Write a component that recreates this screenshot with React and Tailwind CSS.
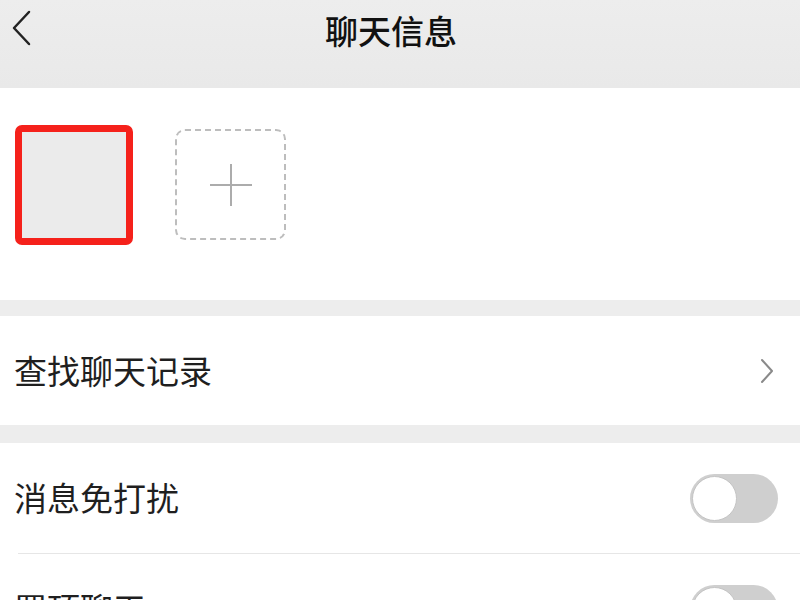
import React from 'react';

function Toggle() {
  return (
    <div className="w-[88px] h-[49px] rounded-full bg-[#cfcfcf] flex items-center px-[2px]">
      <div className="w-[45px] h-[45px] rounded-full bg-white border border-[#c4c4c4]" />
    </div>
  );
}

export default function App() {
  return (
    <div
      className="w-[800px] h-[600px] overflow-hidden bg-[#ededed] text-[#1f1f1f]"
      style={{ fontFamily: '"Noto Sans CJK SC", "Noto Sans", sans-serif' }}
    >
      {/* header */}
      <div className="h-[88px] relative flex justify-center pt-[7px] pr-[18px] bg-gradient-to-b from-[#ededed] to-[#e9e9e9]">
        <button className="absolute left-[10px] top-[10px]">
          <svg width="24" height="38" viewBox="0 0 24 38" fill="none">
            <path d="M19 2 L4 18 L19 34" stroke="#222" strokeWidth="2.5" strokeLinecap="round" strokeLinejoin="round" />
          </svg>
        </button>
        <h1 className="text-[33px] leading-[46px] font-medium text-[#111]">聊天信息</h1>
      </div>

      {/* members */}
      <div className="bg-white h-[212px] flex items-start gap-[42px] pl-[15px] pt-[37px]">
        <div className="w-[118px] h-[120px] rounded-[7px] border-[7px] border-[#f5211b] bg-[#ebebeb]" />
        <div className="w-[111px] h-[111px] mt-[4px] rounded-[10px] border-2 border-dashed border-[#bdbdbd] flex items-center justify-center">
          <svg width="46" height="46" viewBox="0 0 46 46">
            <path d="M23 2 V44 M2 23 H44" stroke="#acacac" strokeWidth="2" />
          </svg>
        </div>
      </div>

      <div className="h-[16px]" />

      {/* search history */}
      <div className="bg-white h-[109px] flex items-center justify-between pl-[14px] pr-[26px]">
        <span className="text-[33px]">查找聊天记录</span>
        <svg width="14" height="26" viewBox="0 0 14 26" fill="none">
          <path d="M2 2 L12 13 L2 24" stroke="#8a8a8a" strokeWidth="2" strokeLinecap="round" strokeLinejoin="round" />
        </svg>
      </div>

      <div className="h-[18px]" />

      {/* switches */}
      <div className="bg-white">
        <div className="h-[110px] flex items-center justify-between pl-[14px] pr-[22px]">
          <span className="text-[33px]">消息免打扰</span>
          <Toggle />
        </div>
        <div className="ml-[18px] h-px bg-[#e6e6e6]" />
        <div className="h-[110px] flex items-center justify-between pl-[14px] pr-[22px]">
          <span className="text-[33px]">置顶聊天</span>
          <Toggle />
        </div>
      </div>
    </div>
  );
}
